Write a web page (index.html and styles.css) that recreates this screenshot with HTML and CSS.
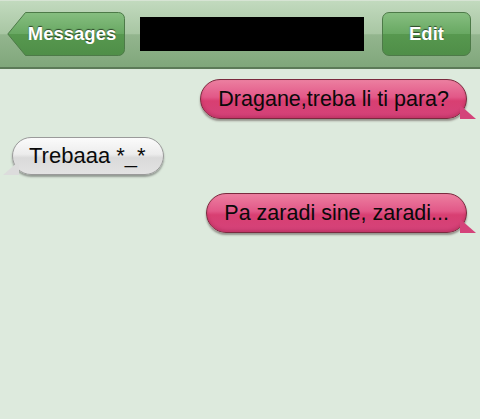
FILE: index.html
```html
<!DOCTYPE html>
<html lang="en">

<head>
    <meta charset="UTF-8" />
    <meta name="viewport" content="width=device-width, initial-scale=1.0" />
    <title>Messages</title>
    <link rel="stylesheet" href="styles.css">
</head>

<body>
    <div class="nav-bar">
        <a class="back-btn" href="#">
            <svg class="back-shape" viewBox="0 0 118 44" xmlns="http://www.w3.org/2000/svg">
                <defs>
                    <linearGradient id="btnGrad" x1="0" y1="0" x2="0" y2="1">
                        <stop offset="0" stop-color="#86be80" />
                        <stop offset="0.5" stop-color="#68a862" />
                        <stop offset="0.51" stop-color="#57984f" />
                        <stop offset="1" stop-color="#4f8e48" />
                    </linearGradient>
                </defs>
                <path d="M18.5 0.5 H111.5 a6 6 0 0 1 6 6 V37.5 a6 6 0 0 1 -6 6 H18.5 L0.8 22 Z"
                    fill="url(#btnGrad)" stroke="#4d7a48" stroke-width="1" />
            </svg>
            <span>Messages</span>
        </a>
        <div class="contact-name"></div>
        <a class="edit-btn" href="#">Edit</a>
    </div>

    <div class="thread">
        <div class="bubble sent">Dragane,treba li ti para?</div>
        <div class="bubble received">Trebaaa *_*</div>
        <div class="bubble sent">Pa zaradi sine, zaradi...</div>
    </div>
</body>

</html>
```

FILE: styles.css
```css
html,
body {
    margin: 0;
    padding: 0;
    background: #ddeadd;
    font-family: 'Liberation Sans', Arial, sans-serif;
    height: 100%;
    overflow: hidden;
}

.nav-bar {
    height: 66px;
    border-top: 1px solid #d7e4d4;
    border-bottom: 2px solid #5c7a58;
    background: linear-gradient(to bottom, #c2dabe 0%, #a8c6a3 50%, #93b58e 51%, #80a77b 100%);
    display: flex;
    align-items: center;
    padding: 0 9px 0 7px;
    box-sizing: content-box;
}

.back-btn,
.edit-btn {
    color: white;
    font-weight: bold;
    font-size: 18.5px;
    text-decoration: none;
    text-shadow: 0 -1px 1px rgba(0, 0, 0, 0.6);
    height: 44px;
    display: flex;
    align-items: center;
    justify-content: center;
    box-sizing: border-box;
}

.back-btn {
    position: relative;
    width: 118px;
    padding-left: 12px;
}

.back-shape {
    position: absolute;
    left: 0;
    top: 0;
    width: 118px;
    height: 44px;
}

.back-btn span {
    position: relative;
}

.edit-btn {
    width: 89px;
    border: 1px solid #4d7a48;
    border-radius: 7px;
    background: linear-gradient(to bottom, #86be80 0%, #68a862 50%, #57984f 51%, #4f8e48 100%);
}

.contact-name {
    width: 224px;
    height: 34px;
    background: black;
    margin: 0 18px 0 15px;
}

.thread {
    display: flex;
    flex-direction: column;
    padding: 10px 13px 0 12px;
    gap: 18px;
}

.bubble {
    position: relative;
    font-size: 21.5px;
    line-height: 38px;
    height: 40px;
    padding: 0 17px;
    border-radius: 20px;
    box-sizing: border-box;
    color: #0a0a0a;
}

.bubble.sent {
    align-self: flex-end;
    background: linear-gradient(to bottom, #ec7fa0 0%, #e25888 45%, #d83f72 55%, #d4437a 100%);
    border: 1px solid #7a2a3e;
    box-shadow: 0 2px 2px rgba(60, 40, 40, 0.45), inset 0 -2px 3px rgba(150, 20, 60, 0.3);
}

.bubble.sent::after {
    content: '';
    position: absolute;
    right: -10px;
    bottom: -1px;
    width: 16px;
    height: 14px;
    background: #d4437a;
    clip-path: polygon(0 0, 100% 100%, 0 100%);
}

.bubble.received {
    align-self: flex-start;
    height: 38px;
    line-height: 36px;
    padding: 0 17px 0 16px;
    font-size: 22px;
    background: linear-gradient(to bottom, #fbfbfb 0%, #ececec 45%, #dadada 55%, #e2e2e2 100%);
    border: 1px solid #9a9a9a;
    box-shadow: 0 2px 2px rgba(60, 60, 60, 0.45);
}

.bubble.received::after {
    content: '';
    position: absolute;
    left: -10px;
    bottom: -1px;
    width: 16px;
    height: 14px;
    background: #dcdcdc;
    clip-path: polygon(100% 0, 100% 100%, 0 100%);
}
```
